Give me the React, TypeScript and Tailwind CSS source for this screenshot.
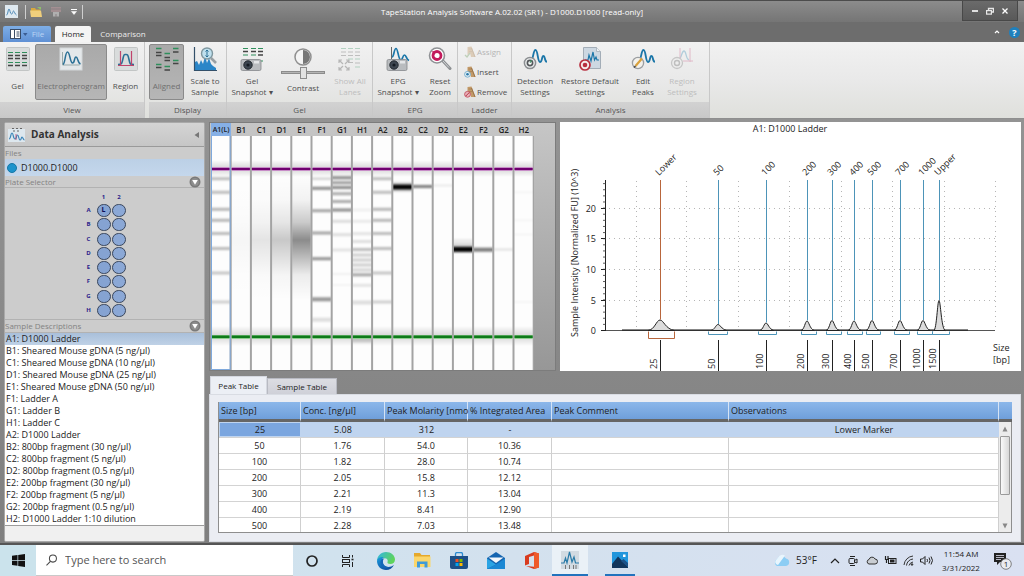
import { useState, type ReactNode } from "react";

/* ---------- data ---------- */

const SAMPLES = [
  "A1: D1000 Ladder",
  "B1: Sheared Mouse gDNA (5 ng/µl)",
  "C1: Sheared Mouse gDNA (10 ng/µl)",
  "D1: Sheared Mouse gDNA (25 ng/µl)",
  "E1: Sheared Mouse gDNA (50 ng/µl)",
  "F1: Ladder A",
  "G1: Ladder B",
  "H1: Ladder C",
  "A2: D1000 Ladder",
  "B2: 800bp fragment (30 ng/µl)",
  "C2: 800bp fragment (5 ng/µl)",
  "D2: 800bp fragment (0.5 ng/µl)",
  "E2: 200bp fragment (30 ng/µl)",
  "F2: 200bp fragment (5 ng/µl)",
  "G2: 200bp fragment (0.5 ng/µl)",
  "H2: D1000 Ladder 1:10 dilution",
];

const ROWS = ["A", "B", "C", "D", "E", "F", "G", "H"];

const PEAK_ROWS = [
  ["25", "5.08", "312", "-", "", "Lower Marker"],
  ["50", "1.76", "54.0", "10.36", "", ""],
  ["100", "1.82", "28.0", "10.74", "", ""],
  ["200", "2.05", "15.8", "12.12", "", ""],
  ["300", "2.21", "11.3", "13.04", "", ""],
  ["400", "2.19", "8.41", "12.90", "", ""],
  ["500", "2.28", "7.03", "13.48", "", ""],
];

const PEAK_HEADERS = [
  "Size [bp]",
  "Conc. [ng/µl]",
  "Peak Molarity [nmo",
  "% Integrated Area",
  "Peak Comment",
  "Observations",
];

/* a band is [y, height, darkness] */
type Band = [number, number, number];

const LADDER: Band[] = [
  [178.7, 3, 0.25], [192.3, 3, 0.25], [209.3, 3, 0.28], [220.3, 3, 0.28],
  [233.5, 3, 0.26], [248.5, 3, 0.26], [273, 3, 0.22], [302, 3, 0.18],
];

const LANES: { name: string; bands: Band[]; smear?: number }[] = [
  { name: "A1(L)", bands: LADDER },
  { name: "B1", bands: [], smear: 0.03 },
  { name: "C1", bands: [], smear: 0.1 },
  { name: "D1", bands: [], smear: 0.21 },
  { name: "E1", bands: [], smear: 0.45 },
  {
    name: "F1",
    bands: [
      [178.7, 2, 0.2], [188.3, 3, 0.45], [210.7, 3, 0.35], [233, 3, 0.35],
      [258.7, 3, 0.42], [299.3, 4, 0.4], [319.7, 4, 0.12],
    ],
  },
  {
    name: "G1",
    bands: [
      [177.7, 3, 0.45], [182.7, 3, 0.38], [187.5, 3, 0.45], [193.7, 3, 0.32],
      [201.5, 3, 0.32], [210, 3, 0.45], [221.3, 3, 0.13], [234.7, 3, 0.12],
      [250, 3, 0.1], [274, 2, 0.05], [285, 2, 0.04],
    ],
  },
  {
    name: "H1",
    bands: [
      [210, 3, 0.05], [221.3, 3, 0.08], [233.7, 3, 0.1], [241.5, 3, 0.12],
      [249.5, 3, 0.25], [255, 3, 0.18], [260, 3, 0.18], [265, 3, 0.18],
      [270, 3, 0.16], [274.8, 3, 0.34], [285.3, 3, 0.1], [302.5, 4, 0.12],
      [340, 5, 0.14],
    ],
  },
  { name: "A2", bands: LADDER },
  { name: "B2", bands: [[187, 10, 0.12], [187, 5, 1]] },
  { name: "C2", bands: [[186.5, 3, 0.5]] },
  { name: "D2", bands: [[185.5, 2, 0.08]] },
  { name: "E2", bands: [[246, 14, 0.07], [248, 9, 0.08], [249.3, 5, 1]] },
  { name: "F2", bands: [[249.7, 4, 0.5]] },
  { name: "G2", bands: [[249.5, 2, 0.12]] },
  { name: "H2", bands: [[192.3, 2, 0.03], [220.3, 2, 0.03], [234.5, 2, 0.03], [302, 2, 0.03]] },
];

const PEAKS = [
  { x: 660, top: "Lower", bottom: "25", h: 10.5, w: 6, left: 648, right: 674, marker: true },
  { x: 718, top: "50", bottom: "50", h: 6, w: 3.6, left: 708, right: 727 },
  { x: 766, top: "100", bottom: "100", h: 7.5, w: 3.2, left: 758, right: 776 },
  { x: 807, top: "200", bottom: "200", h: 9.5, w: 3, left: 801, right: 816 },
  { x: 832, top: "300", bottom: "300", h: 10, w: 3, left: 826, right: 841 },
  { x: 854, top: "400", bottom: "400", h: 9.5, w: 3, left: 847, right: 862 },
  { x: 872, top: "500", bottom: "500", h: 10, w: 3, left: 866, right: 880 },
  { x: 900, top: "700", bottom: "700", h: 10, w: 3, left: 894, right: 909 },
  { x: 923, top: "1000", bottom: "1000", h: 10, w: 3, left: 917, right: 932 },
  { x: 939, top: "Upper", bottom: "1500", h: 30, w: 2.6, left: 932, right: 949 },
];

/* ---------- small icons ---------- */

function GelLines({ x = 0, y = 0, tone = "#444" }: { x?: number; y?: number; tone?: string }) {
  return (
    <g transform={`translate(${x} ${y})`}>
      {[0, 1, 2].map((c) => (
        <g key={c}>
          <path d={`M${c * 7 + 1} 1.5h5M${c * 7 + 1} 11.5h5`} stroke="#2f8f5c" strokeWidth="1.1" />
          <path d={`M${c * 7 + 1} 4.5h5M${c * 7 + 1} 7.5h5M${c * 7 + 1} 14.5h5`} stroke={tone} strokeWidth="1.3" />
        </g>
      ))}
    </g>
  );
}

const GelIcon = (
  <svg viewBox="0 0 24 24" className="size-6">
    <rect x=".5" y=".5" width="23" height="23" rx="1" fill="#d9dcdc" stroke="#c2c5c5" />
    <GelLines x={1} y={4} />
  </svg>
);

const EpgIcon = (
  <svg viewBox="0 0 24 24" className="size-6" fill="none">
    <rect x="1" y="1" width="22" height="22" fill="#e4e8ea" stroke="#d4d8da" />
    <path d="M3.500 5v13h17" stroke="#9aa" strokeWidth="1" />
    <path d="M4 17.500C6.500 16 6 5 8.500 5s2.500 11 5 11 1.500-6 3.500-6 1.500 6 4.500 7" stroke="#2a7096" strokeWidth="1.500" />
  </svg>
);

const RegionIcon = (
  <svg viewBox="0 0 24 24" className="size-6" fill="none">
    <rect x=".5" y=".5" width="23" height="23" rx="1" fill="#d9dcdc" stroke="#c2c5c5" />
    <path d="M4 17.500c4 0 4-1 5-6s1.500-4 3-4 2 0 3 5 1 5 5 5" stroke="#2a7096" strokeWidth="1.600" />
    <path d="M6.500 4v14M17.500 4v14M4 18.500h16" stroke="#c0446c" strokeWidth="1.200" />
  </svg>
);

const AlignedIcon = (
  <svg viewBox="0 0 24 24" className="size-6" fill="none">
    <path d="M1 1.500h5.500M1 17.500h5.500M9.500 6.500H15M9.500 19.500H15M18 1.500h5.500M18 13.500h5.500" stroke="#2f8f5c" strokeWidth="1.300" />
    <path d="M1 5.500h5.500M1 8.500h5.500M1 20.500h5.500M9.500 10.500H15M9.500 13.500H15M9.500 23H15M18 5h5.500M18 16.500h5.500" stroke="#444" strokeWidth="1.400" />
  </svg>
);

const ScaleIcon = (
  <svg viewBox="0 0 24 24" className="size-6" fill="none">
    <path d="M2 23V15l2-1 2 4 2-5 2 4 2-8 2 7 2-5 2 6 2 2 3 2v4z" fill="#2b86c8" />
    <path d="M1.500 0v23.500H24" stroke="#33506a" strokeWidth="1.200" />
    <path d="m18 11 5 5" stroke="#9aa0a4" strokeWidth="2.600" />
    <circle cx="14" cy="6.500" r="5.500" fill="#bfe0ee" stroke="#7f979f" strokeWidth="1.400" />
    <path d="M14 3v7M12.500 4.500 14 3l1.500 1.500M12.500 8.500 14 10l1.500-1.500" stroke="#2a7096" strokeWidth="1" />
  </svg>
);

function Camera() {
  return (
    <g>
      <rect x="1" y="12.500" width="20" height="11" rx="1.500" fill="#b9bcbf" stroke="#85888b" strokeWidth=".8" />
      <rect x="14" y="14" width="5" height="2.500" fill="#e4e6e8" />
      <circle cx="8" cy="18" r="4.200" fill="#3d4650" stroke="#23292f" />
      <circle cx="8" cy="18" r="1.600" fill="#151b22" />
    </g>
  );
}

const GelSnapshotIcon = (
  <svg viewBox="0 0 24 24" className="size-6" fill="none">
    <path d="M3 1.500h5M11 1.500h5M18 1.500h5M3 8h5M11 8h5M18 14h5" stroke="#2f8f5c" strokeWidth="1.200" />
    <path d="M3 4.500h5M11 4.500h5M18 4.500h5M18 8h5" stroke="#444" strokeWidth="1.300" />
    <Camera />
  </svg>
);

const LanesIcon = (
  <svg viewBox="0 0 24 24" className="size-6 opacity-40" fill="none">
    <path d="M3 1.500h5M10 1.500h5M17 1.500h5M10 12h5M17 12h5M17 20h5" stroke="#5aa57e" strokeWidth="1.200" />
    <path d="M3 5h5M10 5h5M17 5h5M3 8.500h5M10 8.500h5M17 8.500h5M10 15.500h5M17 16h5" stroke="#777" strokeWidth="1.200" />
    <path d="M1 16v-3h3M1 13l4 4M11 16v-3H8M11 13l-4 4M1 20v3h3M1 23l4-4M11 20v3H8M11 23l-4-4" stroke="#666" strokeWidth="1.200" />
  </svg>
);

const EpgSnapshotIcon = (
  <svg viewBox="0 0 24 24" className="size-6" fill="none">
    <path d="M5.500 0v12" stroke="#666" />
    <path d="M6 10C8 10 8 1.500 10 1.500s2 9.500 4.500 11.500c2 1 2-5 4-5s1.500 4.500 4.500 5.500" stroke="#1b76a8" strokeWidth="1.700" />
    <Camera />
  </svg>
);

const ResetZoomIcon = (
  <svg viewBox="0 0 24 24" className="size-6" fill="none">
    <path d="m14 13 8 8.500" stroke="#8d9093" strokeWidth="3" strokeLinecap="round" />
    <path d="m15 14 6 6.500" stroke="#d3d6d8" strokeWidth="1" />
    <circle cx="9" cy="8.500" r="7.500" fill="#fff" stroke="#8f9295" strokeWidth="1.600" />
    <circle cx="9" cy="8.500" r="4" stroke="#c21b5c" strokeWidth="2.800" />
    <path d="m3.500 4.500 3.500-.5v4z" fill="#c21b5c" />
  </svg>
);

const WAVE = "M8 13c2.500 0 2-10 4.500-10s2 12 4.500 12 1.500-6 3.500-6S21 14 24 15";

const DetectionIcon = (
  <svg viewBox="0 0 24 24" className="size-6" fill="none">
    <path d={WAVE} stroke="#1b76a8" strokeWidth="1.800" />
    <circle cx="7" cy="16" r="5.600" fill="#eceeef" stroke="#8b8e91" strokeWidth="1.500" />
    <circle cx="7" cy="16" r="2.600" fill="#fff" stroke="#55595c" strokeWidth="1.700" />
    <path d="m7 16 1.500-3" stroke="#3a9a66" strokeWidth="1" />
  </svg>
);

const RestoreIcon = (
  <svg viewBox="0 0 24 24" className="size-6" fill="none">
    <path d="M5.500 .5h13l4 4v17h-17z" fill="#cdd8e2" stroke="#a3adb7" />
    <path d="M18.500.5v4h4" fill="#eef2f5" stroke="#a3adb7" strokeWidth=".8" />
    <path d="M7 13h3l1-5 2 6 2-9 1.500 8 1.500-3 1 3h2" stroke="#1b76a8" strokeWidth="1.200" />
    <circle cx="7" cy="18" r="5" fill="#f4eaea" stroke="#b82f3f" strokeWidth="1.700" />
    <circle cx="7" cy="18" r="2.300" fill="#b82f3f" />
  </svg>
);

const EditPeaksIcon = (
  <svg viewBox="0 0 24 24" className="size-6" fill="none">
    <path d={WAVE} stroke="#1b76a8" strokeWidth="1.800" />
    <circle cx="7" cy="16" r="5.600" fill="#f3f1ec" stroke="#9b9ea1" strokeWidth="1.300" />
    <path d="m4.500 19 6.500-7.500" stroke="#d9a13c" strokeWidth="2.200" />
    <path d="m3 20.500 1.500-1.500" stroke="#444" strokeWidth="1.500" />
  </svg>
);

const RegionSettingsIcon = (
  <svg viewBox="0 0 24 24" className="size-6 opacity-45" fill="none">
    <path d="M9 12c2.500 0 2.500-8 5-8s1.500 8 5 9" stroke="#6aa6c4" strokeWidth="1.300" />
    <path d="M10 1v13M20 1v14M13 14h10" stroke="#d2789a" strokeWidth="1" />
    <circle cx="7" cy="16" r="5.500" fill="#eee" stroke="#999" strokeWidth="1.300" />
    <circle cx="7" cy="16" r="2.500" stroke="#888" strokeWidth="1.400" />
  </svg>
);

function LadderIcon({ kind }: { kind: "assign" | "insert" | "remove" }) {
  return (
    <svg viewBox="0 0 12 12" className="size-3 shrink-0" fill="none">
      <path d="M3.500 1l4-.5L11.500 11H7L6 7 3.500 9z" fill="#c39a68" />
      <path d="M7.500 2 11 11" stroke="#8d6a40" strokeWidth=".8" />
      <path d="M4.500 3h3M5 5.500h4" stroke="#a37d50" strokeWidth=".7" />
      {kind === "insert" && (
        <>
          <circle cx="3.500" cy="8.300" r="2.900" fill="#e6f1f7" stroke="#6fa9c8" strokeWidth=".9" />
          <circle cx="3.500" cy="8.300" r="1.300" fill="#2a78a8" />
        </>
      )}
      {kind === "remove" && (
        <>
          <circle cx="3.500" cy="8.300" r="2.900" fill="#e9b3ba" stroke="#c25060" strokeWidth=".9" />
          <path d="m1.800 10 3.400-3.400" stroke="#b8384a" />
        </>
      )}
      {kind === "assign" && <path d="m1 9 2 2 3-4" stroke="#79a36b" strokeWidth="1.300" />}
    </svg>
  );
}

/* ---------- ribbon ---------- */

type RibbonButtonProps = {
  icon: ReactNode;
  label: string;
  className: string;
  pressed?: boolean;
  disabled?: boolean;
};

function RibbonButton({ icon, label, className, pressed, disabled }: RibbonButtonProps) {
  return (
    <button
      type="button"
      disabled={disabled}
      aria-pressed={pressed}
      className={`flex h-14 shrink-0 flex-col items-center rounded-xs border pt-0.5 ${
        pressed ? "border-[#8a8a8a] bg-linear-to-b from-[#a9a9a9] to-[#b6b6b6] text-[#6f6f6f]" : "border-transparent"
      } ${disabled ? "text-[#bdbdbd]" : ""} ${className}`}
    >
      {icon}
      <span className="flex flex-1 items-center whitespace-pre pt-px text-center leading-[11px]">{label}</span>
    </button>
  );
}

function RibbonGroup({ title, className, children }: { title: string; className: string; children: ReactNode }) {
  return (
    <section className={`flex shrink-0 flex-col border-r border-[#c8c8c8] ${className}`}>
      <div className="flex flex-1 items-center">{children}</div>
      <h2 className="bg-linear-to-b from-[#d2d2d2] to-[#c8c8c8] text-center leading-4 text-[#565656]">{title}</h2>
    </section>
  );
}

function Ribbon() {
  return (
    <div className="flex h-[77px] shrink-0 overflow-hidden border-b border-[#8f8f8f] bg-linear-to-b from-[#f1f1f1] via-[#e9e9e9] to-[#dfe0dc] text-[8px] text-[#4f4f4f]">
      <RibbonGroup title="View" className="w-[145px]">
        <RibbonButton icon={GelIcon} label="Gel" className="w-[35px]" />
        <RibbonButton icon={EpgIcon} label="Electropherogram" className="w-[72px]" pressed />
        <RibbonButton icon={RegionIcon} label="Region" className="w-[37px]" />
      </RibbonGroup>
      <RibbonGroup title="Display" className="w-[82px] pl-1">
        <RibbonButton icon={AlignedIcon} label="Aligned" className="w-[35px]" pressed />
        <RibbonButton icon={ScaleIcon} label={"Scale to\nSample"} className="w-[42px]" />
      </RibbonGroup>
      <RibbonGroup title="Gel" className="w-[146px]">
        <RibbonButton icon={GelSnapshotIcon} label={"Gel\nSnapshot ▾"} className="w-[50px]" />
        <label className="flex h-14 w-[52px] shrink-0 flex-col items-center pt-1">
          <svg viewBox="0 0 18 18" className="size-[18px]">
            <circle cx="9" cy="9" r="8" fill="#f4f4f4" stroke="#8f8f8f" strokeWidth="1.500" />
            <path d="M9 2a7 7 0 0 1 0 14z" fill="#777" />
          </svg>
          <input
            type="range"
            defaultValue={50}
            className="h-3 w-11 appearance-none bg-transparent [&::-webkit-slider-runnable-track]:h-[3px] [&::-webkit-slider-runnable-track]:border [&::-webkit-slider-runnable-track]:border-[#8c8c8c] [&::-webkit-slider-runnable-track]:bg-[#b5b5b5] [&::-webkit-slider-thumb]:-mt-[5px] [&::-webkit-slider-thumb]:h-3 [&::-webkit-slider-thumb]:w-[7px] [&::-webkit-slider-thumb]:appearance-none [&::-webkit-slider-thumb]:border [&::-webkit-slider-thumb]:border-[#8c8c8c] [&::-webkit-slider-thumb]:bg-[#e2e2e2]"
          />
          <span className="pt-1 leading-[11px]">Contrast</span>
        </label>
        <RibbonButton icon={LanesIcon} label={"Show All\nLanes"} className="w-[42px]" disabled />
      </RibbonGroup>
      <RibbonGroup title="EPG" className="w-[85px]">
        <RibbonButton icon={EpgSnapshotIcon} label={"EPG\nSnapshot ▾"} className="w-[50px]" />
        <RibbonButton icon={ResetZoomIcon} label={"Reset\nZoom"} className="w-[34px]" />
      </RibbonGroup>
      <RibbonGroup title="Ladder" className="w-[54px]">
        <div className="flex flex-col gap-2 pl-1.5">
          <button type="button" disabled className="flex items-center gap-px text-[#b5b5b5]">
            <span className="opacity-40"><LadderIcon kind="assign" /></span>Assign
          </button>
          <button type="button" className="flex items-center gap-px"><LadderIcon kind="insert" />Insert</button>
          <button type="button" className="flex items-center gap-px"><LadderIcon kind="remove" />Remove</button>
        </div>
      </RibbonGroup>
      <RibbonGroup title="Analysis" className="w-[198px]">
        <RibbonButton icon={DetectionIcon} label={"Detection\nSettings"} className="w-[46px]" />
        <RibbonButton icon={RestoreIcon} label={"Restore Default\nSettings"} className="w-[64px]" />
        <RibbonButton icon={EditPeaksIcon} label={"Edit\nPeaks"} className="w-[42px]" />
        <RibbonButton icon={RegionSettingsIcon} label={"Region\nSettings"} className="w-[36px]" disabled />
      </RibbonGroup>
    </div>
  );
}

/* ---------- title bar and tabs ---------- */

function TitleBar() {
  return (
    <header className="grid h-[22px] shrink-0 grid-cols-[1fr_auto_1fr] items-center border-t border-[#4c4c4c] bg-linear-to-b from-[#8c8c8c] to-[#757575]">
      <div className="flex items-center pl-[5px]">
        <svg viewBox="0 0 13 13" className="size-[13px]" fill="none">
          <rect width="13" height="13" fill="#dfe9f0" />
          <path d="M1.500 10c1.500 0 1.500-6 2.500-6s1 5 2.500 5 1-3 2-3 1 3 3 4" stroke="#4b87b5" />
        </svg>
        <span className="ml-[7px] h-3.5 w-px bg-[#cfcfcf]" />
        <button type="button" aria-label="Open" className="ml-1">
          <svg viewBox="0 0 12 12" className="size-3">
            <path d="M1 2h4l1 1.500h4V11H1z" fill="#d8a93f" />
            <path d="M0 4.500h11l1 6.500H1z" fill="#f0cf7c" />
            <path d="M7 1h4v3z" fill="#8fc06b" />
          </svg>
        </button>
        <button type="button" aria-label="Save" disabled className="ml-2 opacity-70">
          <svg viewBox="0 0 12 12" className="size-3" fill="none">
            <rect x="1" y="1" width="10" height="5" fill="#b09498" />
            <rect x="3" y="6" width="6" height="4.500" fill="#c4c4c4" />
            <path d="M1 3h10M6 8v3" stroke="#8d8084" />
          </svg>
        </button>
        <button type="button" aria-label="Customize toolbar" className="ml-2">
          <svg viewBox="0 0 8 8" className="size-2">
            <path d="M1 1.500h6" stroke="#fff" />
            <path d="M1.500 3.500h5L4 6.500z" fill="#fff" stroke="#fff" strokeWidth=".5" />
          </svg>
        </button>
        <span className="ml-1 h-3.5 w-px bg-[#cfcfcf]" />
      </div>
      <h1 className="text-[8px] text-white">TapeStation Analysis Software A.02.02 (SR1) - D1000.D1000 [read-only]</h1>
      <div className="mr-1.5 flex h-5 w-14 items-center justify-around self-start justify-self-end border border-t-0 border-[#484848] bg-linear-to-b from-[#6b6b6b] to-[#595959] px-1">
        <button type="button" aria-label="Minimize">
          <svg viewBox="0 0 8 8" className="size-2"><path d="M1 4h6" stroke="#fff" strokeWidth="1.600" /></svg>
        </button>
        <button type="button" aria-label="Restore">
          <svg viewBox="0 0 8 8" className="size-2" fill="none" stroke="#e8e8e8">
            <path d="M2.500 3V1.500h5V5H6" strokeWidth="1.300" />
            <rect x=".6" y="3.600" width="4.800" height="3.500" strokeWidth="1.200" />
          </svg>
        </button>
        <button type="button" aria-label="Close">
          <svg viewBox="0 0 8 8" className="size-2"><path d="m1.500 1.500 5 5m0-5-5 5" stroke="#fff" strokeWidth="1.300" /></svg>
        </button>
      </div>
    </header>
  );
}

function RibbonTabs() {
  return (
    <nav className="flex h-5 shrink-0 items-end bg-[#6d6d6d] pl-[3px] text-[8px] text-[#ececec]">
      <button type="button" className="mr-1 flex h-4 w-12 items-center justify-center gap-1 rounded-t-xs bg-linear-to-b from-[#7eaee6] to-[#5f90d4] text-[#bcd4f4]">
        <svg viewBox="0 0 18 10" className="h-2.5 w-[18px]">
          <rect x=".5" y=".5" width="10" height="9" fill="#fff" stroke="#3a4c66" />
          <path d="M4.500 0v10M6.500 3h3M6.500 5h3M6.500 7h3" stroke="#3a4c66" />
          <path d="M13 4h4.500l-2.200 3z" fill="#3a5c92" />
        </svg>
        File
      </button>
      <button type="button" className="h-4 w-9 rounded-t-xs bg-[#f4f4f4] text-[#222]">Home</button>
      <button type="button" className="h-4 w-16">Comparison</button>
      <div className="ml-auto flex h-full items-center gap-2 pr-1">
        <button type="button" aria-label="Collapse ribbon">
          <svg viewBox="0 0 8 8" className="size-2"><path d="m2 5 2-2 2 2" stroke="#fff" strokeWidth="1.200" fill="none" /></svg>
        </button>
        <button type="button" aria-label="Help" className="flex size-[11px] items-center justify-center rounded-full bg-[#1f80bd] text-[9px] font-bold leading-none text-white">?</button>
      </div>
    </nav>
  );
}

/* ---------- left panel ---------- */

function Collapser({ label }: { label: string }) {
  return (
    <button type="button" aria-label={label} className="mr-[3px]">
      <svg viewBox="0 0 12 12" className="size-3">
        <circle cx="6" cy="6" r="5.500" fill="#7a7a7a" />
        <circle cx="6" cy="6" r="3.900" fill="#8e8e8e" />
        <path d="M3.200 4h5.600L6 8.800z" fill="#fff" />
      </svg>
    </button>
  );
}

function SidePanel() {
  const [sample, setSample] = useState(0);
  return (
    <aside className="flex w-[201px] shrink-0 flex-col overflow-hidden rounded-xs border border-[#a9a9a9] bg-[#cccccc] text-[9px] text-[#222]">
      <header className="flex h-6 shrink-0 items-center gap-1.5 border-b border-[#9a9a9a] bg-linear-to-b from-[#d4d4d4] to-[#c6c6c6] px-[3px]">
        <svg viewBox="0 0 17 15" className="h-[15px] w-[17px]" fill="none">
          <path d="M0 2h17v13H0z" fill="#dde7ee" />
          <path d="M4 1.500h2M8 1.500h2M12 1.500h2M5 4h2M9 4h2" stroke="#666" />
          <path d="M1 12c2 0 1.500-6 3-6s1 6 3 6 1-4 2.500-4 1 5 2.500 5 1-3 2-3 1 3 2.500 3" stroke="#3c85b8" strokeWidth="1.200" />
          <path d="M8 7v6" stroke="#c0446c" strokeWidth=".8" />
        </svg>
        <h2 className="flex-1 text-[10px] font-bold text-[#333]">Data Analysis</h2>
        <button type="button" aria-label="Collapse panel">
          <svg viewBox="0 0 8 8" className="size-2"><path d="M6 1v6L1.500 4z" fill="#777" /></svg>
        </button>
      </header>
      <h3 className="h-3 shrink-0 text-[8px] leading-3 text-[#828282]">Files</h3>
      <a href="#file" className="flex h-[17px] shrink-0 items-center gap-1 bg-linear-to-b from-[#bcd0e6] to-[#c4d7ec] pl-[2px]">
        <span className="size-[10px] rounded-full border border-[#1677a6] bg-[#1d93cc]" />
        D1000.D1000
      </a>
      <div className="flex h-3 shrink-0 items-center justify-between border-b border-[#b2b2b2] text-[8px] text-[#828282]">
        <h3>Plate Selector</h3>
        <Collapser label="Collapse plate selector" />
      </div>
      <div className="h-[131px] shrink-0 pl-[76px] pt-1 text-[6px] font-bold text-[#2a1d8a]">
        <div className="grid w-14 grid-cols-[15px_15px_16px] text-center leading-[10px]">
          <span />
          <span>1</span>
          <span>2</span>
        </div>
        <div className="mt-0.5 grid h-[113px] grid-cols-[15px_15px_16px] content-between">
          {ROWS.map((r) => (
            <div key={r} className="col-span-3 grid grid-cols-subgrid items-center justify-items-center">
              <span>{r}</span>
              <button type="button" aria-label={`Well ${r}1`} className="flex h-[13px] w-3.5 items-center justify-center rounded-full border border-[#39465c] bg-[#85a3d2] text-[7px] text-[#0d0d55]">
                {r === "A" ? "L" : ""}
              </button>
              <button type="button" aria-label={`Well ${r}2`} className="h-[13px] w-3.5 rounded-full border border-[#39465c] bg-[#8ba8d6]" />
            </div>
          ))}
        </div>
      </div>
      <div className="flex h-[14px] shrink-0 items-center justify-between border-y border-[#b2b2b2] text-[8px] text-[#828282]">
        <h3>Sample Descriptions</h3>
        <Collapser label="Collapse sample descriptions" />
      </div>
      <ul className="shrink-0 border-b border-[#9c9c9c] bg-white">
        {SAMPLES.map((s, i) => (
          <li key={s}>
            <button
              type="button"
              onClick={() => setSample(i)}
              className={`block h-3 w-full whitespace-nowrap pl-px text-left text-[9px] leading-3 ${
                i === sample ? "bg-linear-to-b from-[#a9bfda] to-[#bfd1e6]" : ""
              }`}
            >
              {s}
            </button>
          </li>
        ))}
      </ul>
      <div className="flex-1 bg-[#f0f0f0]" />
    </aside>
  );
}

/* ---------- gel ---------- */

function GelPanel() {
  return (
    <section aria-label="Gel image" className="w-[347px] shrink-0 overflow-hidden border border-[#7c7c7c] bg-linear-to-b from-[#c6c6c6] to-[#979797] pl-px">
      <div className="grid w-[323px] grid-cols-16 text-center text-[8px] font-semibold leading-[13px] text-[#222]">
        {LANES.map((lane) => (
          <span key={lane.name} className="pt-px leading-3 first:bg-[#86b0e6] first:text-[7px]">{lane.name}</span>
        ))}
      </div>
      <svg viewBox="211 136 323 234" className="h-[234px] w-[323px]">
        <defs>
          <linearGradient id="smear" x1="0" y1="0" x2="0" y2="1">
            <stop offset="0" stopColor="#000" stopOpacity="0" />
            <stop offset=".2" stopColor="#000" stopOpacity=".1" />
            <stop offset=".38" stopColor="#000" stopOpacity=".45" />
            <stop offset=".52" stopColor="#000" stopOpacity="1" />
            <stop offset=".65" stopColor="#000" stopOpacity=".6" />
            <stop offset=".8" stopColor="#000" stopOpacity=".15" />
            <stop offset="1" stopColor="#000" stopOpacity="0" />
          </linearGradient>
          <linearGradient id="haze" x1="0" y1="0" x2="0" y2="1">
            <stop offset="0" stopOpacity="0" />
            <stop offset=".5" stopOpacity=".16" />
            <stop offset="1" stopOpacity="0" />
          </linearGradient>
          <filter id="soft" x="-5%" y="-100%" width="110%" height="300%">
            <feGaussianBlur stdDeviation="0 .8" />
          </filter>
        </defs>
        <rect x="211" y="136" width="323" height="234" fill="#a3a3a3" />
        {LANES.map((lane, i) => {
          const x = 211.500 + i * 20.2;
          return (
            <g key={lane.name}>
              <rect x={x} y="136" width="18.200" height="234" fill="#fdfdfd" />
              {lane.smear !== undefined && (
                <rect x={x} y="175" width="18.200" height="125" fill="url(#smear)" opacity={lane.smear} />
              )}
              <rect x={x} y="160" width="18.200" height="17" fill="url(#haze)" />
              <rect x={x} y="326" width="18.200" height="20" fill="url(#haze)" />
              {lane.bands.map(([y, h, o]) => (
                <rect key={`${y}-${h}`} x={x} y={y - h / 2} width="18.200" height={h} opacity={o} filter="url(#soft)" />
              ))}
              <rect x={x} y="167" width="18.200" height="4" fill="#c78cc7" />
              <rect x={x} y="168" width="18.200" height="2" fill="#6e006e" />
              <rect x={x} y="335" width="18.200" height="4" fill="#8fce8f" />
              <rect x={x} y="335.500" width="18.200" height="2.500" fill="#0e7a1a" />
            </g>
          );
        })}
        <path d="M211.500 136v233.500h18.700V136" fill="none" stroke="#7fa9dc" />
      </svg>
    </section>
  );
}

/* ---------- electropherogram ---------- */

function peakPath(x: number, w: number, h: number) {
  const b = 330.5;
  return `M${x - w * 2} ${b}C${x - w * 0.9} ${b - 0.5} ${x - w * 0.6} ${b - h} ${x} ${b - h}S${x + w * 0.9} ${b - 1.5} ${x + w * 2.4} ${b}Z`;
}

function ChartPanel() {
  const majors = [
    { v: "20", y: 208.5 },
    { v: "15", y: 238.5 },
    { v: "10", y: 269.5 },
    { v: "5", y: 300.5 },
    { v: "0", y: 330.5 },
  ];
  const minors = Array.from({ length: 24 }, (_, i) => 330.5 - (i + 1) * 6.12);
  return (
    <section aria-label="Electropherogram" className="min-w-0 flex-1 bg-white">
      <svg viewBox="560 122 461 249" className="size-full" fontSize="9" fill="#222">
        <text x="790" y="132" textAnchor="middle">A1: D1000 Ladder</text>
        <g stroke="#b5b5b5" strokeDasharray="1 4">
          {majors.slice(0, 4).map((m) => <path key={m.v} d={`M609 ${m.y}H995`} />)}
          {[636.5, 686.5, 738.5, 789.5, 841.5, 892.5, 944.5, 995.5].map((x) => <path key={x} d={`M${x} 181V330`} />)}
        </g>
        <path d="M605.500 180V331" stroke="#222" />
        <path d="M602 330.500H995" stroke="#555" />
        {majors.map((m) => (
          <g key={m.v}>
            <path d={`M601 ${m.y}h5`} stroke="#222" />
            <text x="596" y={m.y + 3} textAnchor="end">{m.v}</text>
          </g>
        ))}
        {minors.map((y) => <path key={y} d={`M603 ${y}h3`} stroke="#333" strokeWidth=".8" />)}
        <text transform="translate(578 337) rotate(-90)">Sample Intensity [Normalized FU] (10^3)</text>
        <path d="M622 330H968" stroke="#111" strokeWidth="1.200" />
        {PEAKS.map((p) => {
          const color = p.marker ? "#b8663c" : "#4d94b8";
          return (
            <g key={p.bottom}>
              <path d={peakPath(p.x, p.w, p.h)} fill="#dcdcdc" stroke="#222" />
              <path d={`M${p.x + 0.5} 180V${330 - p.h}`} stroke={color} />
              <path d={`M${p.left + 0.5} 331.5V${p.marker ? 338.5 : 334.500}H${p.right + 0.5}V331.5`} fill="none" stroke={color} />
              <path d={`M${p.x + 0.5} 340V371`} stroke="#222" />
              <text transform={`translate(${p.x - 1} 176) rotate(-45)`}>{p.top}</text>
              <text transform={`translate(${p.x - 3} 369) rotate(-90)`}>{p.bottom}</text>
            </g>
          );
        })}
        <g>
          <text x="993" y="351">Size</text>
          <text x="993" y="363">[bp]</text>
        </g>
      </svg>
    </section>
  );
}

/* ---------- tables ---------- */

function TablePanel() {
  const [selected, setSelected] = useState(0);
  return (
    <section className="shrink-0 text-[9px] text-[#222]">
      <div className="flex items-end pl-px text-[8px]">
        <button type="button" className="h-[18px] w-[57px] border border-b-0 border-[#d5d8e0] bg-[#eceff5]">Peak Table</button>
        <button type="button" className="h-4 w-[70px] border border-b-0 border-[#b8bac2] bg-linear-to-b from-[#dcdde2] to-[#cfd0d8]">Sample Table</button>
      </div>
      <div className="border border-[#d9dce3] bg-[#ebedf3] px-2 pb-2 pt-[7px]">
        <div className="flex h-[131px] overflow-hidden border-b border-l border-[#8e8e8e] bg-white">
          <table className="w-full table-fixed border-separate border-spacing-0 self-start">
            <colgroup>
              <col className="w-[82px]" />
              <col className="w-[84px]" />
              <col className="w-[83px]" />
              <col className="w-[84px]" />
              <col className="w-[177px]" />
              <col />
            </colgroup>
            <thead>
              <tr>
                {PEAK_HEADERS.map((h) => (
                  <th key={h} className="h-5 whitespace-nowrap border-b-3 border-r border-b-[#666] border-r-[#d5e3f5] bg-linear-to-b from-[#8cb7ea] to-[#6f9fdb] p-0 pl-0.5 text-left font-normal leading-4">{h}</th>
                ))}
              </tr>
            </thead>
            <tbody>
              {PEAK_ROWS.map((row, r) => (
                <tr key={row[0]} onClick={() => setSelected(r)} className={r === selected ? "bg-[#bfd4ef]" : ""}>
                  {row.map((cell, c) => (
                    <td
                      key={c}
                      className={`h-4 border-b border-b-[#d3d3d3] p-px text-center leading-[13px] ${
                        r === selected ? "" : "border-r border-r-[#cfcfcf]"
                      }`}
                    >
                      {r === selected && c === 0 ? <span className="block bg-[#7ba6df]">{cell}</span> : cell}
                    </td>
                  ))}
                </tr>
              ))}
            </tbody>
          </table>
          <div className="flex w-[13px] shrink-0 flex-col">
            <div className="h-5 shrink-0 border-b-3 border-[#666] bg-linear-to-b from-[#8cb7ea] to-[#6f9fdb]" />
            <div className="flex flex-1 flex-col items-center border-r border-[#8e8e8e] bg-[#ececec] px-px">
              <svg viewBox="0 0 8 8" className="my-0.5 h-2.5 w-2"><path d="M1.500 6.500 4 1.500l2.500 5z" fill="#888" /></svg>
              <div className="h-[59px] w-full rounded-[1px] border border-[#9a9a9a] bg-linear-to-r from-[#fafafa] to-[#d8d8d8]" />
              <svg viewBox="0 0 8 8" className="mb-0.5 mt-auto size-2"><path d="M1.500 1.500 4 6.500l2.500-5z" fill="#888" /></svg>
            </div>
          </div>
        </div>
      </div>
    </section>
  );
}

/* ---------- taskbar ---------- */

function TaskButton({ label, className = "w-[37px]", children }: { label: string; className?: string; children: ReactNode }) {
  return (
    <button type="button" aria-label={label} className={`flex h-full shrink-0 items-center justify-center ${className}`}>
      {children}
    </button>
  );
}

function Taskbar() {
  return (
    <footer className="flex h-[31px] shrink-0 items-center bg-linear-to-r from-[#cde4ee] via-[#d3e1ee] to-[#dae1f2] text-[#222]">
      <TaskButton label="Start" className="w-9 bg-[#cbe3ec]">
        <svg viewBox="0 0 13 13" className="size-[13px]" fill="#111">
          <path d="M0 1.800 5.500 1v5H0zM6.200.9 13 0v6H6.200zM0 6.800h5.500v5L0 11zM6.200 6.800H13V13l-6.800-1z" />
        </svg>
      </TaskButton>
      <label className="flex h-full w-[257px] shrink-0 items-center gap-2 border-b border-[#c9c9c9] bg-white pl-2.5">
        <svg viewBox="0 0 12 12" className="size-3" fill="none" stroke="#444" strokeWidth="1.100">
          <circle cx="7.500" cy="4.500" r="3.800" />
          <path d="M4.800 7.500.5 11.700" />
        </svg>
        <input aria-label="Search" placeholder="Type here to search" className="w-full bg-transparent text-[11px] outline-none placeholder:text-[#555]" />
      </label>
      <TaskButton label="Cortana">
        <svg viewBox="0 0 12 12" className="size-3"><circle cx="6" cy="6" r="5" fill="none" stroke="#222" strokeWidth="1.700" /></svg>
      </TaskButton>
      <TaskButton label="Task view" className="w-[35px]">
        <svg viewBox="0 0 13 12" className="h-3 w-[13px]" fill="none" stroke="#222">
          <path d="M1.500 0v2.500h7V0M1.500 12V9.500h7V12M11.500 0v2.500M11.500 7v5" />
          <rect x="1.500" y="4.500" width="7" height="3" />
          <path d="M10.500 4.500h2" strokeWidth="1.600" />
        </svg>
      </TaskButton>
      <TaskButton label="Edge" className="w-[42px]">
        <svg viewBox="0 0 18 18" className="size-[18px]">
          <defs>
            <linearGradient id="edgeA" x1="0" y1="0" x2="1" y2=".4">
              <stop offset="0" stopColor="#2fb5e8" />
              <stop offset="1" stopColor="#5fd45a" />
            </linearGradient>
            <linearGradient id="edgeB" x1="0" y1="0" x2=".6" y2="1">
              <stop offset="0" stopColor="#1b9de0" />
              <stop offset="1" stopColor="#0f4fa0" />
            </linearGradient>
          </defs>
          <path d="M0 9C0 4 4 0 9 0s9 3.500 9 7.500c0 3-2.300 4.500-4.500 4.500S10 11 10.500 10c.8-1.600-.2-3.800-3-3.800C4 6.200.5 8 0 9z" fill="url(#edgeA)" />
          <path d="M0 9c.3-3 3.500-4.500 6.500-4C4.500 7 5 11 7.500 13.500c2.500 2 6 2 9.500-.5-1.500 3-4.500 5-8 5-5 0-9-4-9-9z" fill="url(#edgeB)" />
          <path d="M6 9c-.5 4 3 7 7 6-5 2.500-9.500-.5-9.500-4.500C3.500 7 6 6.500 7.500 6.500 6.500 7 6 8 6 9z" fill="#1566b8" />
        </svg>
      </TaskButton>
      <TaskButton label="File Explorer" className="w-[31px]">
        <svg viewBox="0 0 17 15" className="h-[15px] w-[17px]">
          <path d="M0 0h6l1.500 2H16v11H0z" fill="#e5a92d" />
          <path d="M0 3.500h16.500V14H0z" fill="#fbd66b" />
          <path d="M3 14.500V8.500h10.500v6h-3V11H6v3.500z" fill="#3f9bd9" />
        </svg>
      </TaskButton>
      <TaskButton label="Microsoft Store" className="w-[42px]">
        <svg viewBox="0 0 18 18" className="size-[18px]">
          <path d="M5.500 5V2c0-.8.500-1.500 1.500-1.500h4c1 0 1.500.7 1.500 1.500v3" fill="none" stroke="#2c8ad0" strokeWidth="1.300" />
          <path d="M0 4h18v11a2 2 0 0 1-2 2H2a2 2 0 0 1-2-2z" fill="#1d4f86" />
          <path d="M5.500 7h3v3h-3z" fill="#f25022" /><path d="M9.500 7h3v3h-3z" fill="#7fba00" />
          <path d="M5.500 11h3v3h-3z" fill="#00a4ef" /><path d="M9.500 11h3v3h-3z" fill="#ffb900" />
        </svg>
      </TaskButton>
      <TaskButton label="Mail" className="w-8">
        <svg viewBox="0 0 18 17" className="h-[17px] w-[18px]">
          <path d="M0 6 9 0l9 6v11H0z" fill="#1565b0" />
          <path d="M1.500 5.500h15L9 11z" fill="#f4f8fb" />
          <path d="M0 6.500 9 12.500 0 17z" fill="#2aa4e4" />
          <path d="M18 6.500 9 12.500 0 17h18z" fill="#1b88d4" />
        </svg>
      </TaskButton>
      <TaskButton label="Office" className="w-10">
        <svg viewBox="0 0 14 17" className="h-[17px] w-3.5">
          <path d="M0 4 9 0l5 1.500v14L9 17l-8-3 8 .8V3.500L4 5v7l-4 1.500z" fill="#d83b1f" />
          <path d="M9 0l5 1.500v14L9 17z" fill="#ee5a2a" />
        </svg>
      </TaskButton>
      <TaskButton label="TapeStation Analysis" className="w-9 border-b-2 border-[#2273bd] bg-[#eaf1f7]">
        <svg viewBox="0 0 18 18" className="size-[18px]" fill="none">
          <rect width="18" height="18" fill="#d2dbe2" />
          <path d="M0 12h3l1.500-5L6 12l2.500-11L11 11l2-5 1.500 6H18" stroke="#2a7ba8" strokeWidth="1.200" />
          <path d="M4.500 14v4M8.500 14v4M12.500 14v4M15 14v4" stroke="#777" />
        </svg>
      </TaskButton>
      <span className="w-[17px]" />
      <TaskButton label="Photos" className="w-[30px] border-b-2 border-[#2273bd]">
        <svg viewBox="0 0 16 16" className="size-4">
          <rect width="16" height="16" fill="#2196dc" />
          <path d="M0 12 6 4.500 16 15v1H0z" fill="#12365c" />
          <path d="m9 9 2.500-2L16 11v4z" fill="#1d5288" />
          <rect x="11" y="2.500" width="2.500" height="2.500" fill="#fff" />
        </svg>
      </TaskButton>
      <div className="ml-auto flex items-center pr-3">
        <svg viewBox="0 0 17 13" className="mr-1.5 h-[13px] w-[17px]">
          <path d="M4 12a4 4 0 0 1 0-7A5 5 0 0 1 13 4.500 3.800 3.800 0 0 1 13 12z" fill="#8ccdf4" />
          <path d="M5 11 12 1.500a5 5 0 0 0-7 2L3 6a3 3 0 0 0 2 5z" fill="#e8f5fd" />
        </svg>
        <span className="w-[34px] text-[10px]">53°F</span>
        <svg viewBox="0 0 10 10" className="mr-2 size-2.5" fill="none" stroke="#222" strokeWidth="1.200"><path d="m1 7 4-4 4 4" /></svg>
        <svg viewBox="0 0 10 12" className="mr-2 h-3 w-2.5" fill="none" stroke="#222">
          <path d="M2 1.500h5M2 10.500h5" /><rect x="1" y="3.500" width="5.500" height="5" rx="1" /><path d="m6.500 5.500 2.500-1.500v4L6.500 7" />
        </svg>
        <svg viewBox="0 0 12 9" className="mr-1.5 h-[9px] w-3" fill="#c9cdd2" stroke="#333">
          <path d="M3 8a2.300 2.300 0 0 1 0-4.500A3.200 3.200 0 0 1 9 3a2.500 2.500 0 0 1 0 5z" />
        </svg>
        <svg viewBox="0 0 13 9" className="mr-1.5 h-[9px] w-[13px]" fill="none" stroke="#222">
          <path d="M1.500 0v3.500h2.500V0M2.500 3.500V7" strokeWidth="1.200" />
          <rect x="4.500" y="2.500" width="7.500" height="5" /><path d="M6 5h4.500" strokeWidth="3" />
        </svg>
        <svg viewBox="0 0 11 11" className="mr-1.5 size-[11px]" fill="none" stroke="#333">
          <path d="M1 10A10 10 0 0 1 10 1M3.500 10.500A7 7 0 0 1 10 4M6 10.500A5 5 0 0 1 10 7" /><circle cx="9" cy="9.500" r=".8" fill="#333" />
        </svg>
        <svg viewBox="0 0 14 11" className="h-[11px] w-3.5" fill="none" stroke="#222">
          <path d="M.5 4v3h2L5 9.500v-8L2.500 4zM7 4q1 1.500 0 3M9 2.500q2 3 0 6M11 1.500q3 4 0 8" />
        </svg>
        <time className="ml-1.5 w-[42px] whitespace-nowrap text-center text-[8px] leading-[14px]">
          11:54 AM
          <br />
          3/31/2022
        </time>
        <button type="button" aria-label="Notifications" className="ml-3">
          <svg viewBox="0 0 18 18" className="size-[18px]">
            <path d="M0 1h12v9H6l-3 3v-3H0z" fill="#222" />
            <path d="M2 3.500h8M2 5.500h8M2 7.500h5" stroke="#dde" strokeWidth=".8" />
            <circle cx="12" cy="12" r="5.300" fill="#e9ebf1" stroke="#666" strokeWidth=".8" />
            <text x="12" y="15" textAnchor="middle" fontSize="8" fill="#222">1</text>
          </svg>
        </button>
      </div>
    </footer>
  );
}

export default function App() {
  return (
    <div className="flex h-screen min-h-[560px] flex-col overflow-hidden bg-[#888] font-['Open_Sans','Noto_Sans',sans-serif]">
      <TitleBar />
      <RibbonTabs />
      <Ribbon />
      <main className="flex min-h-0 flex-1 gap-1 border-b-2 border-[#555] bg-linear-to-b from-[#939393] to-[#7f7f7f] pb-px pl-1 pr-[3px] pt-[3px]">
        <SidePanel />
        <div className="flex min-w-0 flex-1 flex-col gap-[5px]">
          <div className="flex min-h-0 flex-1 gap-1">
            <GelPanel />
            <ChartPanel />
          </div>
          <TablePanel />
        </div>
      </main>
      <Taskbar />
    </div>
  );
}
